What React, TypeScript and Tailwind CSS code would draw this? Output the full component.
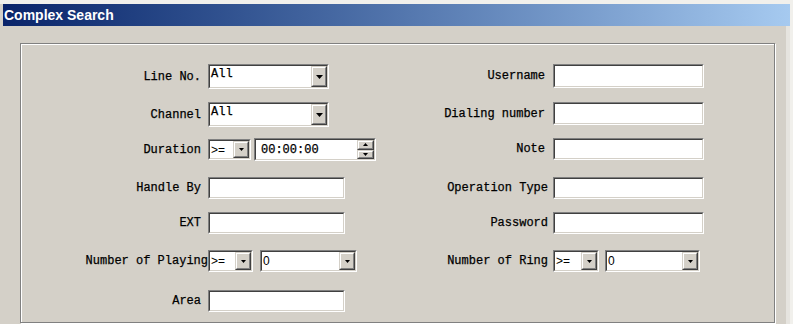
import React from "react";

const mono = "font-['Liberation_Mono','DejaVu_Sans_Mono',monospace] text-[12px] text-black [-webkit-text-stroke:0.25px_#000]";
const sans = "font-['Liberation_Sans',Arial,sans-serif] text-[12px] text-black";

type BoxProps = { className?: string; children?: React.ReactNode };

// classic win32 sunken edit frame
const Sunken = ({ className = "", children }: BoxProps) => (
    <div className={`border border-t-[#808080] border-l-[#808080] border-b-white border-r-white ${className}`}>
        <div className="flex h-full border border-t-[#404040] border-l-[#404040] border-b-[#d4d0c8] border-r-[#d4d0c8] bg-white">
            {children}
        </div>
    </div>
);

const Raised = ({ className = "", children }: BoxProps) => (
    <div className={`flex border border-t-[#d4d0c8] border-l-[#d4d0c8] border-b-[#404040] border-r-[#404040] bg-[#d4d0c8] ${className}`}>
        <div className="flex flex-1 items-center justify-center border border-t-white border-l-white border-b-[#808080] border-r-[#808080]">
            {children}
        </div>
    </div>
);

const Arrow = ({ w = 7, up = false }: { w?: number; up?: boolean }) => {
    const h = Math.ceil(w / 2);
    return (
        <svg width={w} height={h} viewBox={`0 0 ${w} ${h}`}>
            <path d={up ? `M0 ${h}H${w}L${w / 2} 0z` : `M0 0H${w}L${w / 2} ${h}z`} fill="#000" />
        </svg>
    );
};

const Edit = ({ className = "" }: { className?: string }) => <Sunken className={`h-[22px] ${className}`} />;

const Combo = ({ value, className = "", small = false }: { value: string; className?: string; small?: boolean }) => (
    <Sunken className={className}>
        <div className={`flex-1 pl-[1px] leading-[14px] ${small ? sans + " pt-[2px]" : mono + " pt-[1px]"}`}>{value}</div>
        <Raised className="w-[16px]">
            <Arrow w={small ? 5 : 7} />
        </Raised>
    </Sunken>
);

const TimeEdit = () => (
    <Sunken className="h-[23px] w-[122px]">
        <div className={`flex flex-1 items-center pl-[5px] ${mono}`}>00:00:00</div>
        <div className="flex w-[17px] flex-col">
            <Raised className="flex-1">
                <Arrow w={5} up />
            </Raised>
            <Raised className="flex-1">
                <Arrow w={5} />
            </Raised>
        </div>
    </Sunken>
);

const LeftRow = ({ label, children, tight = false }: { label: string; children: React.ReactNode; tight?: boolean }) => (
    <div className="flex items-center self-start">
        <div className={`w-[187px] text-right whitespace-nowrap ${tight ? "pr-0" : "pr-[7px]"} ${mono}`}>{label}</div>
        {children}
    </div>
);

const RightRow = ({ label, children, pr = 8 }: { label: string; children: React.ReactNode; pr?: number }) => (
    <div className="flex items-center self-start">
        <div className={`w-[153px] text-right whitespace-nowrap ${pr === 8 ? "pr-[8px]" : "pr-[5px]"} ${mono}`}>{label}</div>
        {children}
    </div>
);

export default function App() {
    return (
        <div className="h-[324px] w-[793px] overflow-hidden bg-[#d4d0c8]">
            <div className="h-[4px] bg-[#f1f0ec]" />
            <div className="flex">
                <div className="ml-[3px] flex h-[22px] w-[787px] items-center bg-linear-to-r from-[#0a246a] to-[#a6caf0] pl-[1px] font-['Liberation_Sans',Arial,sans-serif] text-[14px] font-bold text-white">
                    Complex Search
                </div>
                <div className="flex-1 bg-[#f1f0ec]" />
            </div>

            <div className="flex">
                <div className="w-[786px]">
                    {/* group box */}
                    <div className="ml-[20px] mt-[17px] h-[280px] w-[755px] border border-[#808080] shadow-[inset_1px_1px_0_#fff,1px_1px_0_#fff]">
                        <div className="grid grid-cols-[379px_1fr] grid-rows-[38px_36px_39px_35px_38px_40px_32px] pt-[20px]">
                            <LeftRow label="Line No.">
                                <Combo value="All" className="h-[25px] w-[121px]" />
                            </LeftRow>
                            <RightRow label="Username">
                                <Edit className="h-[24px] w-[151px]" />
                            </RightRow>

                            <LeftRow label="Channel">
                                <Combo value="All" className="h-[25px] w-[121px]" />
                            </LeftRow>
                            <RightRow label="Dialing number">
                                <Edit className="h-[23px] w-[151px]" />
                            </RightRow>

                            <LeftRow label="Duration">
                                <div className="flex items-center gap-[3px]">
                                    <Combo value=">=" small className="h-[21px] w-[43px]" />
                                    <TimeEdit />
                                </div>
                            </LeftRow>
                            <RightRow label="Note">
                                <Edit className="w-[151px]" />
                            </RightRow>

                            <LeftRow label="Handle By">
                                <Edit className="w-[137px]" />
                            </LeftRow>
                            <RightRow label="Operation Type" pr={5}>
                                <Edit className="w-[151px]" />
                            </RightRow>

                            <LeftRow label="EXT">
                                <Edit className="w-[137px]" />
                            </LeftRow>
                            <RightRow label="Password" pr={5}>
                                <Edit className="w-[151px]" />
                            </RightRow>

                            <LeftRow label="Number of Playing" tight>
                                <div className="flex items-center gap-[7px]">
                                    <Combo value=">=" small className="h-[22px] w-[45px]" />
                                    <Combo value="0" small className="h-[22px] w-[97px]" />
                                </div>
                            </LeftRow>
                            <RightRow label="Number of Ring" pr={5}>
                                <div className="flex items-center gap-[6px]">
                                    <Combo value=">=" small className="h-[22px] w-[46px]" />
                                    <Combo value="0" small className="h-[22px] w-[95px]" />
                                </div>
                            </RightRow>

                            <LeftRow label="Area">
                                <Edit className="w-[137px]" />
                            </LeftRow>
                            <div />
                        </div>
                    </div>
                </div>
                {/* lighter window edge on the right */}
                <div className="h-[298px] w-[4px] bg-[#e6e4df]" />
                <div className="h-[298px] flex-1 bg-[#f1f0ec]" />
            </div>
        </div>
    );
}
